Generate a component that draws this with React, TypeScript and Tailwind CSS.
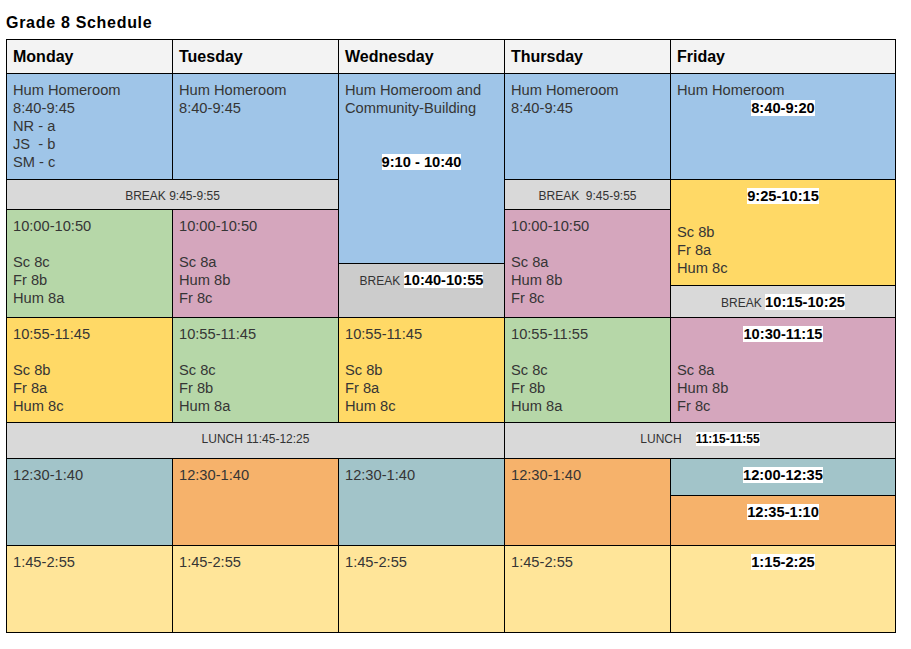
import React from "react";

const base = "border-r border-b border-black pt-[7px] px-[6px] text-[14.67px] leading-[18px] text-[#353535] overflow-hidden";
const small = "border-r border-b border-black pt-[6px] px-[6px] text-[14.67px] leading-[18px] text-[#353535] overflow-hidden";

function B({ children }: { children: React.ReactNode }) {
  return <span className="bg-white font-bold text-black">{children}</span>;
}

function Blank() {
  return <div className="h-[18px]" />;
}

export default function App() {
  return (
    <div className="w-[911px] h-[649px] bg-white font-['Liberation_Sans',Arial,sans-serif]">
      <div className="h-[39px] pl-[6px] pt-[13px] text-[16px] leading-[20px] font-bold tracking-[0.7px] text-black">Grade 8 Schedule</div>
      <div className="ml-[6px] w-[890px] grid grid-cols-[166px_166px_166px_166px_225px] grid-rows-[34px_106px_30px_54px_22px_32px_105px_36px_37px_50px_87px] border-l border-t border-black">
        {/* Header */}
        {["Monday", "Tuesday", "Wednesday", "Thursday", "Friday"].map((d) => (
          <div key={d} className="border-r border-b border-black bg-[#f3f3f3] pt-[7px] px-[6px] text-[16px] leading-[20px] font-bold text-black">
            {d}
          </div>
        ))}

        {/* Homeroom row */}
        <div className={`${base} col-start-1 row-start-2 bg-[#9fc5e8]`}>
          <div>Hum Homeroom</div>
          <div>8:40-9:45</div>
          <div>NR - a</div>
          <div className="whitespace-pre">JS  - b</div>
          <div>SM - c</div>
        </div>
        <div className={`${base} col-start-2 row-start-2 bg-[#9fc5e8]`}>
          <div>Hum Homeroom</div>
          <div>8:40-9:45</div>
        </div>
        <div className={`${base} col-start-3 row-start-2 row-span-3 bg-[#9fc5e8]`}>
          <div>Hum Homeroom and</div>
          <div>Community-Building</div>
          <Blank />
          <Blank />
          <div className="text-center"><B>9:10 - 10:40</B></div>
        </div>
        <div className={`${base} col-start-4 row-start-2 bg-[#9fc5e8]`}>
          <div>Hum Homeroom</div>
          <div>8:40-9:45</div>
        </div>
        <div className={`${base} col-start-5 row-start-2 bg-[#9fc5e8]`}>
          <div>Hum Homeroom</div>
          <div className="text-center"><B>8:40-9:20</B></div>
        </div>

        {/* Break row */}
        <div className={`${small} col-start-1 col-span-2 row-start-3 bg-[#d9d9d9] text-center`}>
          <span className="text-[12px] text-[#333]">BREAK 9:45-9:55</span>
        </div>
        <div className={`${small} col-start-4 row-start-3 bg-[#d9d9d9] text-center`}>
          <span className="text-[12px] text-[#333] whitespace-pre">BREAK  9:45-9:55</span>
        </div>
        <div className={`${base} col-start-5 row-start-3 row-span-3 bg-[#ffd966]`}>
          <div className="text-center"><B>9:25-10:15</B></div>
          <Blank />
          <div>Sc 8b</div>
          <div>Fr 8a</div>
          <div>Hum 8c</div>
        </div>

        {/* 10:00 row */}
        <div className={`${base} col-start-1 row-start-4 row-span-3 bg-[#b6d7a8]`}>
          <div>10:00-10:50</div>
          <Blank />
          <div>Sc 8c</div>
          <div>Fr 8b</div>
          <div>Hum 8a</div>
        </div>
        <div className={`${base} col-start-2 row-start-4 row-span-3 bg-[#d5a6bd]`}>
          <div>10:00-10:50</div>
          <Blank />
          <div>Sc 8a</div>
          <div>Hum 8b</div>
          <div>Fr 8c</div>
        </div>
        <div className={`${base} col-start-3 row-start-5 row-span-2 bg-[#cccccc] text-center`}>
          <span className="text-[12px] text-[#333]">BREAK </span>
          <B>10:40-10:55</B>
        </div>
        <div className={`${base} col-start-4 row-start-4 row-span-3 bg-[#d5a6bd]`}>
          <div>10:00-10:50</div>
          <Blank />
          <div>Sc 8a</div>
          <div>Hum 8b</div>
          <div>Fr 8c</div>
        </div>
        <div className={`${base} col-start-5 row-start-6 bg-[#d9d9d9] text-center`}>
          <span className="text-[12px] text-[#333]">BREAK </span>
          <B>10:15-10:25</B>
        </div>

        {/* 10:55 row */}
        <div className={`${base} col-start-1 row-start-7 bg-[#ffd966]`}>
          <div>10:55-11:45</div>
          <Blank />
          <div>Sc 8b</div>
          <div>Fr 8a</div>
          <div>Hum 8c</div>
        </div>
        <div className={`${base} col-start-2 row-start-7 bg-[#b6d7a8]`}>
          <div>10:55-11:45</div>
          <Blank />
          <div>Sc 8c</div>
          <div>Fr 8b</div>
          <div>Hum 8a</div>
        </div>
        <div className={`${base} col-start-3 row-start-7 bg-[#ffd966]`}>
          <div>10:55-11:45</div>
          <Blank />
          <div>Sc 8b</div>
          <div>Fr 8a</div>
          <div>Hum 8c</div>
        </div>
        <div className={`${base} col-start-4 row-start-7 bg-[#b6d7a8]`}>
          <div>10:55-11:55</div>
          <Blank />
          <div>Sc 8c</div>
          <div>Fr 8b</div>
          <div>Hum 8a</div>
        </div>
        <div className={`${base} col-start-5 row-start-7 bg-[#d5a6bd]`}>
          <div className="text-center"><B>10:30-11:15</B></div>
          <Blank />
          <div>Sc 8a</div>
          <div>Hum 8b</div>
          <div>Fr 8c</div>
        </div>

        {/* Lunch row */}
        <div className={`${small} col-start-1 col-span-3 row-start-8 bg-[#d9d9d9] text-center`}>
          <span className="text-[12px] text-[#333]">LUNCH 11:45-12:25</span>
        </div>
        <div className={`${small} col-start-4 col-span-2 row-start-8 bg-[#d9d9d9] text-center`}>
          <span className="text-[12px] text-[#333]">LUNCH</span>
          <span className="ml-[14px] text-[12px] bg-white font-bold text-black">11:15-11:55</span>
        </div>

        {/* 12:30 row */}
        <div className={`${base} col-start-1 row-start-9 row-span-2 bg-[#a2c4c9]`}>12:30-1:40</div>
        <div className={`${base} col-start-2 row-start-9 row-span-2 bg-[#f6b26b]`}>12:30-1:40</div>
        <div className={`${base} col-start-3 row-start-9 row-span-2 bg-[#a2c4c9]`}>12:30-1:40</div>
        <div className={`${base} col-start-4 row-start-9 row-span-2 bg-[#f6b26b]`}>12:30-1:40</div>
        <div className={`${base} col-start-5 row-start-9 bg-[#a2c4c9] text-center`}>
          <B>12:00-12:35</B>
        </div>
        <div className={`${base} col-start-5 row-start-10 bg-[#f6b26b] text-center`}>
          <B>12:35-1:10</B>
        </div>

        {/* 1:45 row */}
        <div className={`${base} col-start-1 row-start-11 bg-[#ffe599]`}>1:45-2:55</div>
        <div className={`${base} col-start-2 row-start-11 bg-[#ffe599]`}>1:45-2:55</div>
        <div className={`${base} col-start-3 row-start-11 bg-[#ffe599]`}>1:45-2:55</div>
        <div className={`${base} col-start-4 row-start-11 bg-[#ffe599]`}>1:45-2:55</div>
        <div className={`${base} col-start-5 row-start-11 bg-[#ffe599] text-center`}>
          <B>1:15-2:25</B>
        </div>
      </div>
    </div>
  );
}
